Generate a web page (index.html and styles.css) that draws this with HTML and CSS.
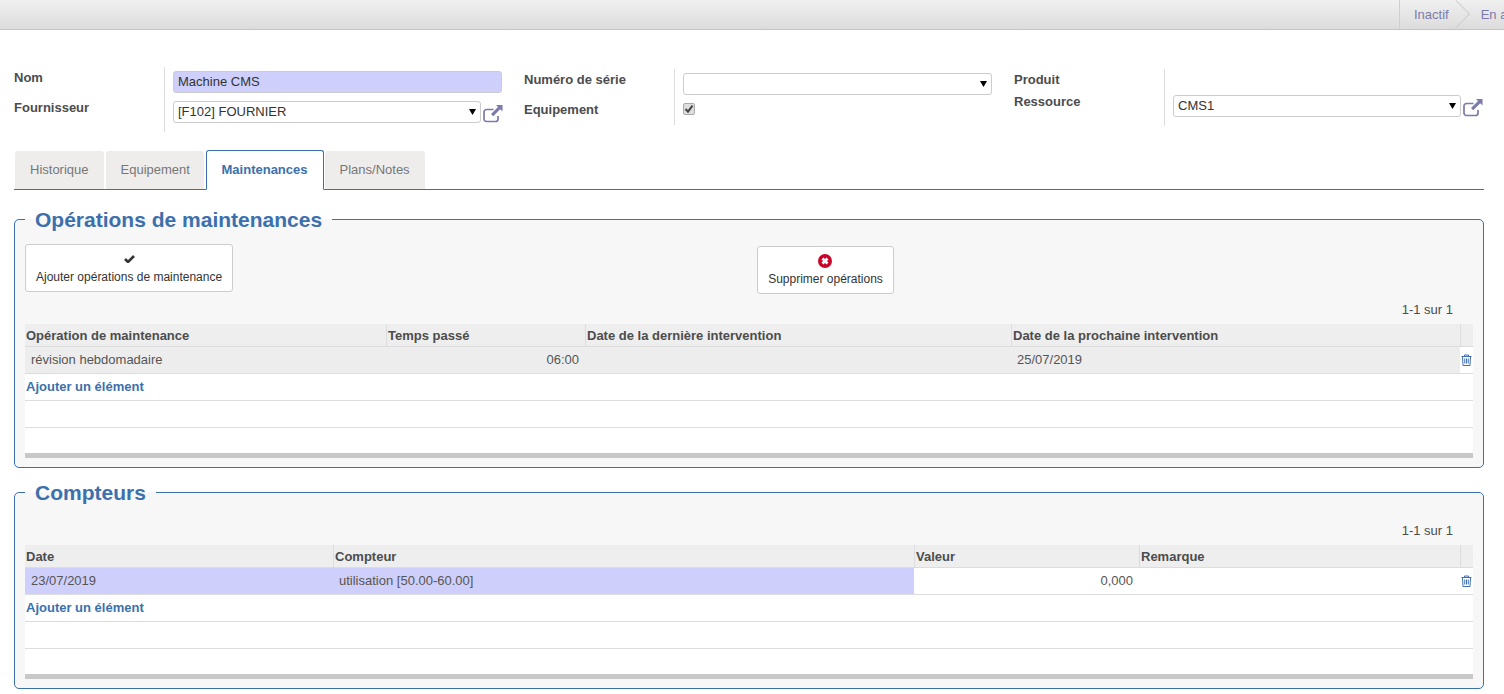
FILE: index.html
```html
<!DOCTYPE html>
<html lang="fr">
<head>
    <meta charset="UTF-8">
    <title>Machine CMS</title>
    <link rel="stylesheet" href="styles.css">
</head>
<body>

    <!-- Status bar -->
    <div class="statusbar">
        <div class="statusbar-left"></div>
        <div class="step">Inactif<span class="step-arrow"></span></div>
        <div class="step">En attente</div>
    </div>

    <!-- Header fields -->
    <div class="form-head">
        <div class="group group-name">
            <div class="row row-a">
                <label class="label">Nom</label>
                <div class="value"><input class="field field-required" type="text" value="Machine CMS"></div>
            </div>
            <div class="row row-b">
                <label class="label">Fournisseur</label>
                <div class="value">
                    <select class="field"><option>[F102] FOURNIER</option></select>
                    <svg class="ext-link" viewBox="0 0 20 20"><path d="M10.500 5.500H3.500a2.500 2.500 0 0 0-2.500 2.500v7a2.500 2.500 0 0 0 2.500 2.500h9a2.500 2.500 0 0 0 2.500-2.500V12" fill="none" stroke="#7b7aab" stroke-width="1.700"/><path d="M13 1h6.500v6.500l-2.300-2.300-7 7-2.200-2.200 7-7z" fill="#7b7aab"/></svg>
                </div>
            </div>
        </div>
        <div class="group group-serial">
            <div class="row row-a">
                <label class="label">Numéro de série</label>
                <div class="value"><select class="field"><option></option></select></div>
            </div>
            <div class="row row-c">
                <label class="label">Equipement</label>
                <div class="value"><input class="check" type="checkbox" checked disabled></div>
            </div>
        </div>
        <div class="group group-serial">
            <div class="row row-empty">
                <label class="label">Produit</label>
                <div class="value"></div>
            </div>
            <div class="row row-d">
                <label class="label">Ressource</label>
                <div class="value">
                    <select class="field"><option>CMS1</option></select>
                    <svg class="ext-link" viewBox="0 0 20 20"><path d="M10.500 5.500H3.500a2.500 2.500 0 0 0-2.500 2.500v7a2.500 2.500 0 0 0 2.500 2.500h9a2.500 2.500 0 0 0 2.500-2.500V12" fill="none" stroke="#7b7aab" stroke-width="1.700"/><path d="M13 1h6.500v6.500l-2.300-2.300-7 7-2.200-2.200 7-7z" fill="#7b7aab"/></svg>
                </div>
            </div>
        </div>
    </div>

    <!-- Tabs -->
    <ul class="tabs">
        <li class="tab">Historique</li>
        <li class="tab">Equipement</li>
        <li class="tab active">Maintenances</li>
        <li class="tab">Plans/Notes</li>
    </ul>

    <fieldset class="box box-ops">
        <legend>Opérations de maintenances</legend>
        <div class="actions">
            <button class="action action-add">
                <svg class="icon-check" viewBox="0 0 11 8"><path d="M1 4l3 3 6-6" fill="none" stroke="#333" stroke-width="2.600"/></svg>
                <span>Ajouter opérations de maintenance</span>
            </button>
            <button class="action action-delete">
                <svg class="icon-remove" viewBox="0 0 14 14"><circle cx="7" cy="7" r="7" fill="#c9062a"/><path d="M4.500 4.500l5 5M9.500 4.500l-5 5" stroke="#fff" stroke-width="2.800"/></svg>
                <span>Supprimer opérations</span>
            </button>
        </div>
        <div class="pager">1-1 sur 1</div>
        <table class="list">
            <colgroup><col class="c361"><col class="c199"><col class="c426"><col class="c449"><col class="c13"></colgroup>
            <thead>
                <tr><th>Opération de maintenance</th><th>Temps passé</th><th>Date de la dernière intervention</th><th>Date de la prochaine intervention</th><th></th></tr>
            </thead>
            <tbody>
                <tr class="row-grey">
                    <td>révision hebdomadaire</td><td class="num">06:00</td><td></td><td>25/07/2019</td>
                    <td class="del"><svg class="icon-trash" viewBox="0 0 11 12"><path d="M3.500 2.500V1h4v1.500M.5 2.500h10M1.500 2.500l.5 9h7l.5-9" fill="none" stroke="#3f6fb0" stroke-width="1"/><path d="M3.750 4.500v5M5.500 4.500v5M7.250 4.500v5" stroke="#3f6fb0" stroke-width="1"/></svg></td>
                </tr>
                <tr><td colspan="5"><a class="add-line" href="#">Ajouter un élément</a></td></tr>
                <tr><td colspan="5"></td></tr>
                <tr class="last"><td colspan="5"></td></tr>
            </tbody>
        </table>
    </fieldset>

    <fieldset class="box box-counters">
        <legend>Compteurs</legend>
        <div class="pager">1-1 sur 1</div>
        <table class="list">
            <colgroup><col class="c308"><col class="c581"><col class="c225"><col class="c321"><col class="c13"></colgroup>
            <thead>
                <tr><th>Date</th><th>Compteur</th><th>Valeur</th><th>Remarque</th><th></th></tr>
            </thead>
            <tbody>
                <tr>
                    <td class="hl">23/07/2019</td><td class="hl">utilisation [50.00-60.00]</td><td class="num">0,000</td><td></td>
                    <td class="del"><svg class="icon-trash" viewBox="0 0 11 12"><path d="M3.500 2.500V1h4v1.500M.5 2.500h10M1.500 2.500l.5 9h7l.5-9" fill="none" stroke="#3f6fb0" stroke-width="1"/><path d="M3.750 4.500v5M5.500 4.500v5M7.250 4.500v5" stroke="#3f6fb0" stroke-width="1"/></svg></td>
                </tr>
                <tr><td colspan="5"><a class="add-line" href="#">Ajouter un élément</a></td></tr>
                <tr><td colspan="5"></td></tr>
                <tr class="last"><td colspan="5"></td></tr>
            </tbody>
        </table>
    </fieldset>

</body>
</html>
```

FILE: styles.css
```css
* {
    box-sizing: border-box;
}

html, body {
    height: 100%;
    overflow: hidden;
}

body {
    margin: 0;
    background: #fff;
    color: #4c4c4c;
    font-family: "Liberation Sans", Arial, sans-serif;
    font-size: 13px;
}

/* Status bar */
.statusbar {
    display: flex;
    height: 30px;
    overflow: hidden;
    background: linear-gradient(#f0f0f0, #dcdcdc);
    border-bottom: 1px solid #c4c4c4;
}
.statusbar-left {
    flex: none;
    width: 1399px;
}
.step {
    flex: none;
    position: relative;
    padding: 0 32px 0 14px;
    line-height: 29px;
    color: #7c7bad;
    border-left: 1px solid #cfcfcf;
    white-space: nowrap;
}
.step + .step {
    border-left: none;
    padding-left: 0;
}
.step-arrow {
    position: absolute;
    top: 4px;
    right: 15px;
    width: 20px;
    height: 20px;
    transform: rotate(45deg);
    border-top: 1px solid #cfcfcf;
    border-right: 1px solid #cfcfcf;
}

/* Header fields */
.form-head {
    display: flex;
    align-items: flex-start;
    gap: 22px;
    padding: 37px 14px 0;
}
.group {
    flex: none;
    width: 468px;
    margin-top: 2px;
}
.group-name {
    width: 488px;
    margin-top: 0;
}
.row {
    display: grid;
    grid-template-columns: 150px 1fr;
}
.row-a {
    height: 30px;
}
.row-b {
    height: 35px;
}
.row-c {
    height: 26px;
}
.row-empty {
    height: 22px;
}
.row-d {
    height: 35px;
}
.label {
    font-weight: bold;
    line-height: 22px;
}
.value {
    display: flex;
    align-items: flex-start;
    padding: 4px 0 0 8px;
    border-left: 1px solid #ddd;
}
.field {
    flex: 1;
    min-width: 0;
    height: 22px;
    padding: 0 4px 2px;
    border: 1px solid #ccc;
    border-radius: 3px;
    background-color: #fff;
    color: #333;
    font: 13px "Liberation Sans", Arial, sans-serif;
    outline: none;
}
select.field {
    appearance: none;
    background-image: url("data:image/svg+xml,%3Csvg xmlns='http://www.w3.org/2000/svg' width='7' height='6'%3E%3Cpath d='M0 0h7L3.500 6z' fill='%23000'/%3E%3C/svg%3E");
    background-repeat: no-repeat;
    background-position: right 4px center;
}
.field-required {
    background-color: #cfcffb;
}
.ext-link {
    flex: none;
    width: 20px;
    height: 20px;
    margin: 3px -1px 0 2px;
}
.check {
    appearance: none;
    width: 12px;
    height: 12px;
    margin: 0;
    border: 1px solid #aaa;
    border-radius: 2px;
    background: #dedede url("data:image/svg+xml,%3Csvg xmlns='http://www.w3.org/2000/svg' width='10' height='10'%3E%3Cpath d='M1.500 5l2.500 2.700 4.500-6' fill='none' stroke='%23444' stroke-width='2'/%3E%3C/svg%3E") center no-repeat;
}

/* Tabs */
.tabs {
    display: flex;
    gap: 2px;
    height: 40px;
    margin: 18px 20px 0 14px;
    padding: 0 0 0 1px;
    list-style: none;
    border-bottom: 1px solid #3c70ad;
}
.tab {
    height: 38px;
    margin-top: 1px;
    padding: 0 15px;
    line-height: 37px;
    color: #777;
    background: #eeedec;
    border-radius: 3px 3px 0 0;
}
.tab:nth-child(2) {
    width: 98px;
}
.tab.active {
    width: 118px;
    height: 40px;
    margin-top: 0;
    padding: 0;
    line-height: 37px;
    text-align: center;
    font-weight: bold;
    color: #3c70ad;
    background: #fff;
    border: 1px solid #3c70ad;
    border-bottom-color: #fff;
}
.tab:last-child {
    margin-left: -1px;
}

/* Boxes */
.box {
    width: 1470px;
    margin: 16px 0 0 14px;
    padding: 0 10px;
    min-width: 0;
    background: #f7f7f7;
    border: 1px solid #3c70ad;
    border-radius: 5px;
}
.box-ops {
    height: 262px;
}
.box-counters {
    height: 210px;
    margin-top: 11px;
}
.box legend {
    padding: 2px 10px 0;
    font-size: 21px;
    font-weight: bold;
    line-height: 24px;
    color: #3c70ad;
}
.actions {
    display: flex;
    align-items: flex-start;
    padding-top: 12px;
}
.action {
    display: flex;
    flex-direction: column;
    align-items: center;
    height: 48px;
    padding: 10px 10px 0;
    background: #fff;
    border: 1px solid #ccc;
    border-radius: 3px;
    color: #333;
    font: 12px "Liberation Sans", Arial, sans-serif;
}
.action-delete {
    margin: 2px 0 0 524px;
    padding-top: 7px;
}
.icon-check {
    width: 11px;
    height: 8px;
    margin-bottom: 7px;
}
.icon-remove {
    width: 14px;
    height: 14px;
    margin-bottom: 4px;
}
.pager {
    margin-top: 7px;
    padding-right: 20px;
    height: 23px;
    line-height: 17px;
    text-align: right;
}
.box-counters .pager {
    margin-top: 17px;
}

/* Lists */
.list {
    width: 1448px;
    table-layout: fixed;
    border-collapse: separate;
    border-spacing: 0;
    background: #fff;
}
.c361 { width: 361px; }
.c199 { width: 199px; }
.c426 { width: 426px; }
.c449 { width: 449px; }
.c308 { width: 308px; }
.c581 { width: 581px; }
.c225 { width: 225px; }
.c321 { width: 321px; }
.c13 { width: 13px; }
.list th {
    height: 23px;
    padding: 0 1px;
    text-align: left;
    font-weight: bold;
    background: #eee;
    border-bottom: 1px solid #ddd;
    box-shadow: inset 1px 0 0 #ddd;
}
.list th:first-child {
    box-shadow: none;
}
.list th + th {
    padding-left: 2px;
}
.list td {
    height: 27px;
    padding: 0 6px 2px;
    color: #555;
    border-bottom: 1px solid #ddd;
}
.list tr.last td {
    height: 30px;
    border-bottom: 5px solid #c8c8c8;
}
.row-grey td {
    background: #ededed;
}
.row-grey td.del {
    background: #fff;
}
.list td.hl {
    background: #cfcffb;
}
.list td.num {
    text-align: right;
}
.list td.del {
    padding: 0 0 1px;
    text-align: center;
}
.list td[colspan] {
    padding-left: 1px;
}
.add-line {
    color: #3c70ad;
    font-weight: bold;
    text-decoration: none;
}
.icon-trash {
    display: block;
    width: 11px;
    height: 12px;
    margin: 0 auto;
}
```
